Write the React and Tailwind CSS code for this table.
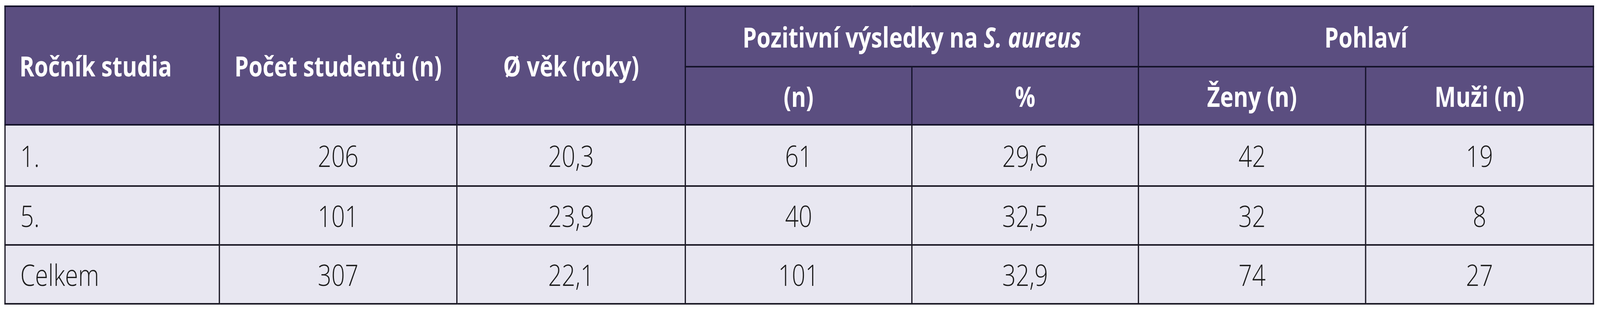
import React, { useLayoutEffect, useState } from 'react';

const rows = [
  ['1.', '206', '20,3', '61', '29,6', '42', '19'],
  ['5.', '101', '23,9', '40', '32,5', '32', '8'],
  ['Celkem', '307', '22,1', '101', '32,9', '74', '27'],
];

const head = 'border-[4px] border-[#15132a] bg-[#5b4e80] text-white font-bold text-[72px] leading-none whitespace-nowrap';
const cell = 'border-[4px] border-[#1d1b27] text-[#1c1c1c] font-light text-[76px] leading-none';

export default function App() {
  // the table is drawn for a 5113px wide page; squeeze it horizontally when the window is narrower
  const [sx, setSx] = useState(1);
  useLayoutEffect(() => {
    const fit = () => setSx(Math.min(1, window.innerWidth / 5113));
    fit();
    window.addEventListener('resize', fit);
    return () => window.removeEventListener('resize', fit);
  }, []);

  return (
    <div className="w-full h-[800px] overflow-hidden bg-white">
      <div
        className="w-[5113px] h-[800px] pl-[14px] pt-[14px] origin-top-left font-['Open_Sans',sans-serif]"
        style={{ transform: `scaleX(${sx})` }}
      >
        <table className="table-fixed border-collapse w-[5076px]">
          <colgroup>
            <col className="w-[685px]" />
            <col className="w-[759px]" />
            <col className="w-[730px]" />
            <col className="w-[724px]" />
            <col className="w-[724px]" />
            <col className="w-[726px]" />
            <col className="w-[728px]" />
          </colgroup>
          <thead>
            <tr className="h-[155px]">
              <th rowSpan={2} className={`${head} text-left pl-[44px]`}>Ročník studia</th>
              <th rowSpan={2} className={`${head} text-center`}>Počet studentů (n)</th>
              <th rowSpan={2} className={`${head} text-center`}>Ø věk (roky)</th>
              <th colSpan={2} className={`${head} text-center`}>
                Pozitivní výsledky na <span className="italic">S. aureus</span>
              </th>
              <th colSpan={2} className={`${head} text-center`}>Pohlaví</th>
            </tr>
            <tr className="h-[149px]">
              <th className={`${head} text-center`}>(n)</th>
              <th className={`${head} text-center`}>%</th>
              <th className={`${head} text-center`}>Ženy (n)</th>
              <th className={`${head} text-center`}>Muži (n)</th>
            </tr>
          </thead>
          <tbody className="bg-[#e8e7f1]">
            {rows.map((r, i) => (
              <tr key={i} className={i === 0 ? 'h-[157px]' : 'h-[151px]'}>
                {r.map((v, j) => (
                  <td key={j} className={`${cell} ${j === 0 ? 'text-left pl-[47px]' : 'text-center'}`}>
                    {v}
                  </td>
                ))}
              </tr>
            ))}
          </tbody>
        </table>
      </div>
    </div>
  );
}
